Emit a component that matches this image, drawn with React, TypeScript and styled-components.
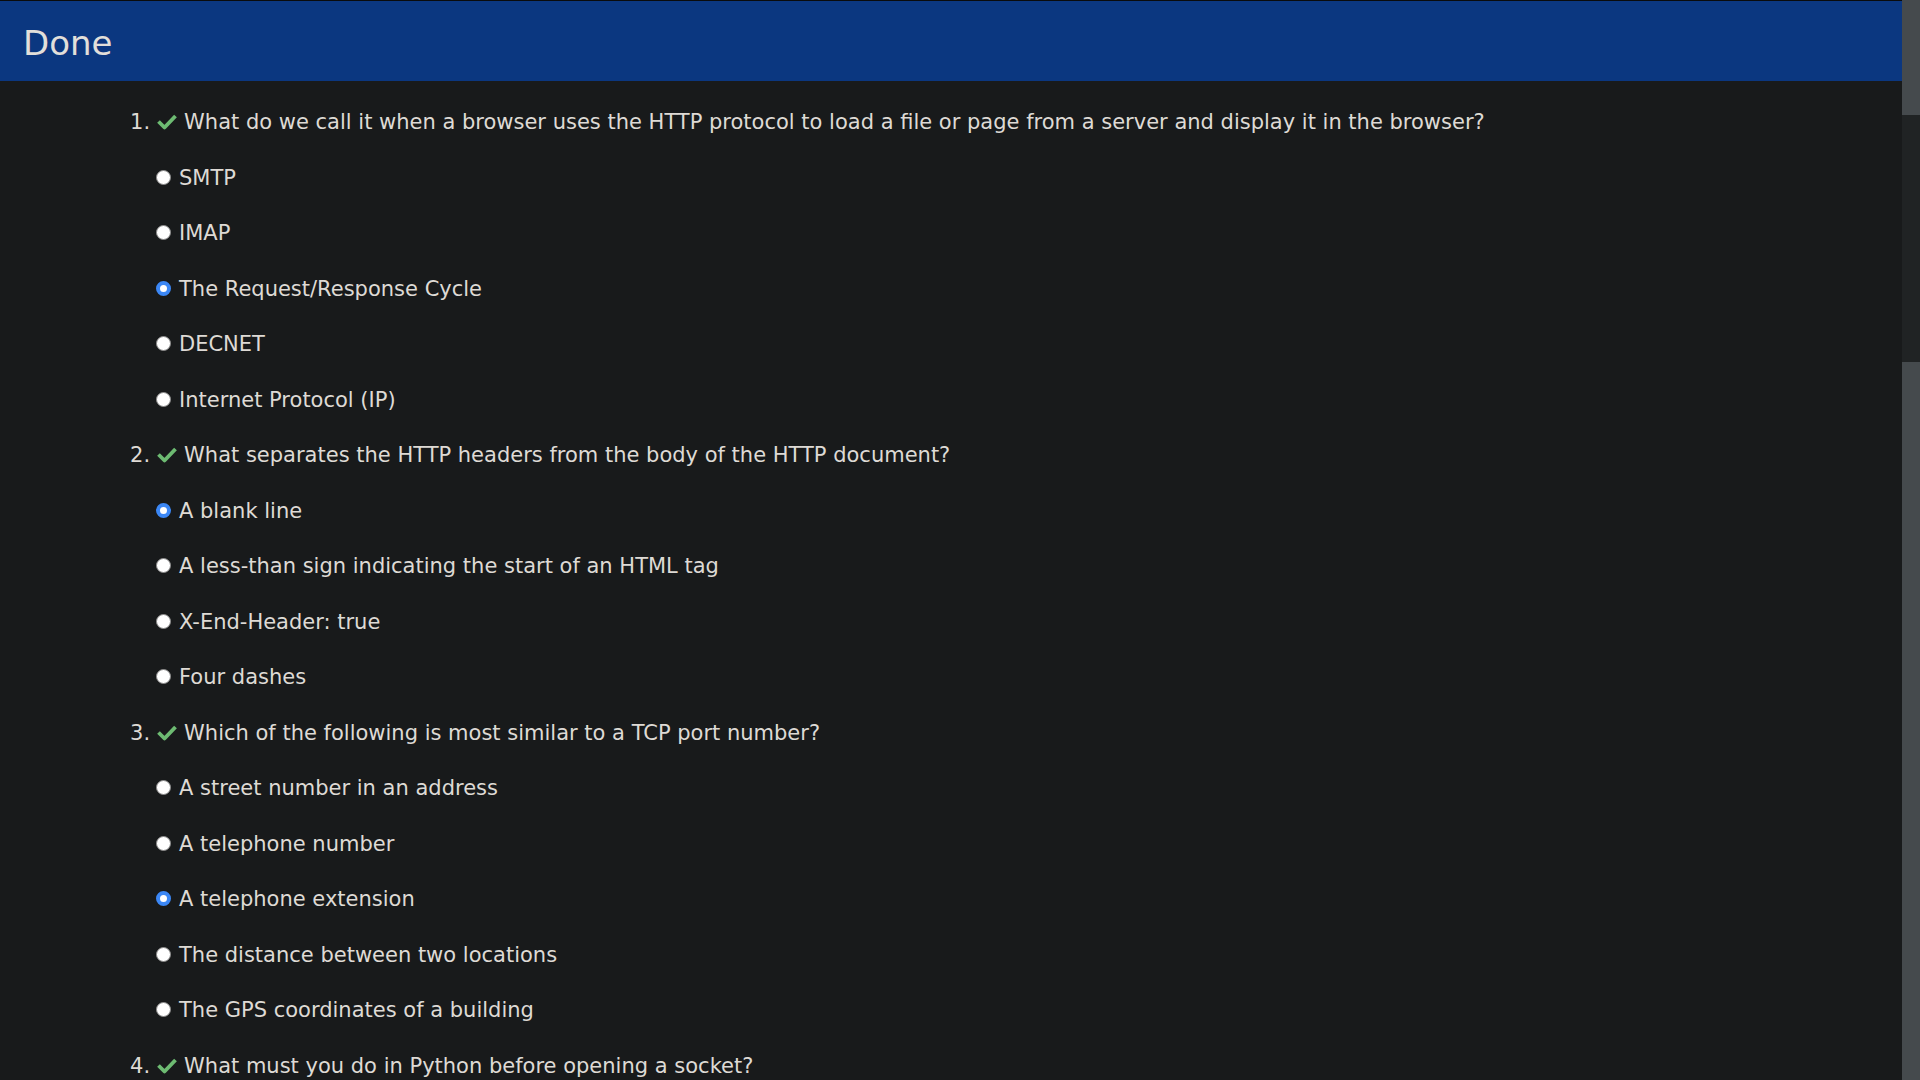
import styled, { createGlobalStyle } from "styled-components";

const GlobalStyle = createGlobalStyle`
  html, body {
    margin: 0;
    padding: 0;
    background: #181a1b;
    overflow: hidden;
  }
  body {
    font-family: "DejaVu Sans", "Liberation Sans", sans-serif;
    color: #dedad5;
  }
`;

const Page = styled.div`
  display: flex;
  height: 100vh;
  overflow: hidden;
`;

const Main = styled.div`
  flex: 1;
  display: flex;
  flex-direction: column;
  min-width: 0;
`;

const Header = styled.header`
  flex: none;
  height: 81px;
  box-sizing: border-box;
  border-top: 1px solid #0a0b0c;
  background: #0b3780;
  display: flex;
  align-items: center;
  padding: 3px 0 0 23px;
`;

const Title = styled.h1`
  margin: 0;
  font-size: 34px;
  font-weight: normal;
  color: #e2dfda;
`;

const QuizList = styled.div`
  flex: none;
  padding: 14px 0 0 130px;
  font-size: 21px;
`;

const Row = styled.div<{ $indent?: boolean }>`
  display: flex;
  align-items: center;
  height: 55.5px;
  line-height: 55.5px;
  padding-left: ${(p) => (p.$indent ? "26px" : "0")};
  white-space: nowrap;
`;

const Num = styled.span`
  margin-right: 6px;
`;

const Check = styled.svg`
  width: 22px;
  height: 17px;
  margin-right: 6px;
  margin-top: -2px;
`;

const Radio = styled.span<{ $on?: boolean }>`
  width: 15px;
  height: 15px;
  border-radius: 50%;
  box-sizing: border-box;
  background: #fff;
  border: ${(p) => (p.$on ? "4px solid #3b87f5" : "1px solid #8a8a8a")};
  margin-right: 8px;
  margin-top: -2px;
  flex: none;
`;

const ScrollBar = styled.div`
  width: 18px;
  flex: none;
  display: flex;
  flex-direction: column;
  background: #202324;
`;

const Thumb = styled.div<{ $h?: number }>`
  background: #454a4d;
  height: ${(p) => (p.$h ? `${p.$h}px` : "auto")};
  flex: ${(p) => (p.$h ? "none" : "1")};
`;

const Track = styled.div`
  height: 247px;
  flex: none;
  background: #202324;
`;

type Question = { q: string; options: string[]; chosen: number };

const questions: Question[] = [
  {
    q: "What do we call it when a browser uses the HTTP protocol to load a file or page from a server and display it in the browser?",
    options: [
      "SMTP",
      "IMAP",
      "The Request/Response Cycle",
      "DECNET",
      "Internet Protocol (IP)",
    ],
    chosen: 2,
  },
  {
    q: "What separates the HTTP headers from the body of the HTTP document?",
    options: [
      "A blank line",
      "A less-than sign indicating the start of an HTML tag",
      "X-End-Header: true",
      "Four dashes",
    ],
    chosen: 0,
  },
  {
    q: "Which of the following is most similar to a TCP port number?",
    options: [
      "A street number in an address",
      "A telephone number",
      "A telephone extension",
      "The distance between two locations",
      "The GPS coordinates of a building",
    ],
    chosen: 2,
  },
  {
    q: "What must you do in Python before opening a socket?",
    options: [],
    chosen: -1,
  },
];

const CheckIcon = () => (
  <Check viewBox="0 0 22 17">
    <polyline
      points="2.5,8.5 8.5,14.5 19.5,3"
      fill="none"
      stroke="#6dbb72"
      strokeWidth="3.8"
      strokeLinejoin="round"
    />
  </Check>
);

export default function App() {
  return (
    <Page>
      <GlobalStyle />
      <Main>
        <Header>
          <Title>Done</Title>
        </Header>
        <QuizList>
          {questions.map((item, i) => (
            <div key={i}>
              <Row>
                <Num>{i + 1}.</Num>
                <CheckIcon />
                <span>{item.q}</span>
              </Row>
              {item.options.map((opt, j) => (
                <Row $indent key={j}>
                  <Radio $on={j === item.chosen} />
                  <span>{opt}</span>
                </Row>
              ))}
            </div>
          ))}
        </QuizList>
      </Main>
      <ScrollBar>
        <Thumb $h={115} />
        <Track />
        <Thumb />
      </ScrollBar>
    </Page>
  );
}
